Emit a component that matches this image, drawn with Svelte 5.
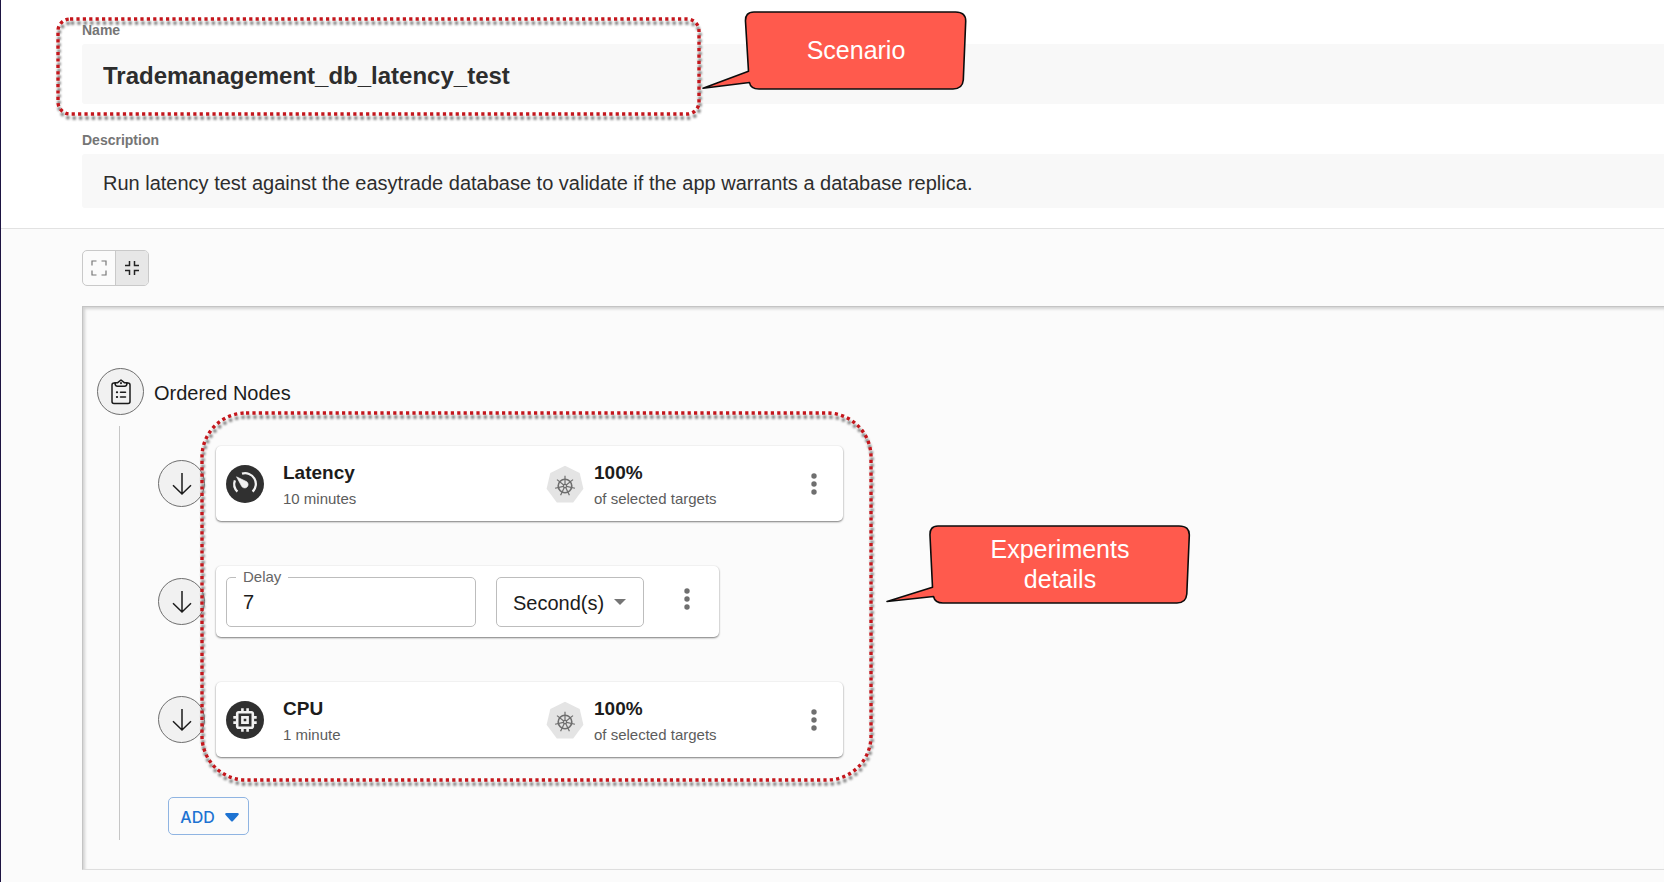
<script>
  let name = $state('Trademanagement_db_latency_test');
  let description = $state(
    'Run latency test against the easytrade database to validate if the app warrants a database replica.'
  );
  let expanded = $state(false);
  let delay = $state('7');
  let unit = $state('Second(s)');

  const spokes = Array.from({ length: 7 }, (_, i) => (i * 360) / 7);
</script>

{#snippet dots()}
  <button class="more" type="button" aria-label="More actions">
    <svg width="8" height="24" viewBox="0 0 8 24">
      <circle cx="4" cy="4" r="2.7" /><circle cx="4" cy="12" r="2.7" /><circle cx="4" cy="20" r="2.7" />
    </svg>
  </button>
{/snippet}

{#snippet arrow()}
  <span class="circle">
    <svg width="22" height="24" viewBox="0 0 22 24" fill="none" stroke="#1b1b1b" stroke-width="1.5">
      <path d="M11 1V22M2 13.2L11 22L20 13.2" />
    </svg>
  </span>
{/snippet}

{#snippet experiment(kind, title, length)}
  <li class="row">
    {@render arrow()}
    <article class="card experiment">
      <svg class="badge" width="38" height="38" viewBox="0 0 38 38">
        <circle cx="19" cy="19" r="19" fill="#303030" />
        {#if kind === 'latency'}
          <g fill="none" stroke="#f1f1f1" stroke-width="2.3">
            <path d="M16 8.7A10.700 10.700 0 0 1 26.600 26.600" />
            <path d="M8.900 15.400A10.700 10.700 0 0 0 11.400 26.600" />
          </g>
          <path
            d="M10.500 11.800L20.800 16.700A3.500 3.500 0 1 1 15.500 21Z"
            fill="#f1f1f1"
            stroke="#f1f1f1"
            stroke-width="0.6"
            stroke-linejoin="round"
          />
        {:else}
          <path
            transform="translate(3.4 3.4) scale(1.3)"
            fill="#f1f1f1"
            d="M15 9H9v6h6V9zm-2 4h-2v-2h2v2zm8-2V9h-2V7c0-1.1-.9-2-2-2h-2V3h-2v2h-2V3H9v2H7c-1.1 0-2 .9-2 2v2H3v2h2v2H3v2h2v2c0 1.1.9 2 2 2h2v2h2v-2h2v2h2v-2h2c1.1 0 2-.9 2-2v-2h2v-2h-2v-2h2zm-4 6H7V7h10v10z"
          />
        {/if}
      </svg>
      <div class="text what">
        <strong>{title}</strong>
        <span>{length}</span>
      </div>
      <svg class="kube" width="38" height="38" viewBox="0 0 38 38">
        <path d="M19 .8L33.7 7.9L37.4 23.8L27.2 37.4H10.8L.6 23.8L4.3 7.9Z" fill="#e4e4e4" />
        <g fill="none" stroke="#6e6e6e" transform="translate(19 21)">
          <circle r="6.8" stroke-width="1.6" />
          <circle r="1.6" stroke-width="1.2" />
          {#each spokes as angle}
            <path d="M0 -1.6V-10.2" stroke-width="1.2" transform={`rotate(${angle})`} />
          {/each}
        </g>
      </svg>
      <div class="text">
        <strong>100%</strong>
        <span>of selected targets</span>
      </div>
      {@render dots()}
    </article>
  </li>
{/snippet}

{#snippet frame(w, h, r)}
  <svg width={w + 12} height={h + 12} fill="none" stroke-width="3.4" stroke-dasharray="3.2 3.2">
    <rect class="shade" x="4" y="7" width={w} height={h} rx={r} stroke="#767676" />
    <rect x="3" y="3" width={w} height={h} rx={r} stroke="#c4161c" />
  </svg>
{/snippet}

<main>
  <section class="fields">
    <div class="field">
      <label for="name">Name</label>
      <input id="name" class="name" type="text" bind:value={name} />
    </div>
    <div class="field">
      <label for="description">Description</label>
      <input id="description" type="text" bind:value={description} />
    </div>
    <div class="frame frame-scenario">{@render frame(641, 95, 12)}</div>
    <div class="callout callout-scenario">
      <svg width="266" height="80" viewBox="0 0 266 80">
        <path
          d="M53 1H254.500Q265 1 264.700 10.500L262.300 69Q261.500 78 252 78H58Q49.500 78 48.500 71.500L2 77.200L47.500 60.300L44.500 10.500Q44 1 53 1Z"
        />
      </svg>
      <span>Scenario</span>
    </div>
  </section>

  <section class="workspace">
    <div class="toggle">
      <button type="button" aria-label="Expand" aria-pressed={expanded} onclick={() => (expanded = true)}>
        <svg width="16" height="16" viewBox="0 0 16 16" fill="none" stroke="#777" stroke-width="1.2">
          <path d="M1 5.500V1H5.500M10.500 1H15V5.500M15 10.500V15H10.500M5.500 15H1V10.500" />
        </svg>
      </button>
      <button type="button" aria-label="Collapse" aria-pressed={!expanded} onclick={() => (expanded = false)}>
        <svg width="16" height="16" viewBox="0 0 16 16" fill="none" stroke="#222" stroke-width="1.5">
          <path d="M1 5.500H5.500V1M10.500 1V5.500H15M15 10.500H10.500V15M5.500 15V10.500H1" />
        </svg>
      </button>
    </div>

    <div class="canvas">
      <header>
        <span class="circle">
          <svg width="22" height="26" viewBox="0 0 22 26" fill="none" stroke="#1b1b1b" stroke-width="1.5" stroke-linejoin="round" stroke-linecap="round">
            <path d="M5.500 4H4Q2 4 2 6V22.500Q2 24.500 4 24.500H18Q20 24.500 20 22.500V6Q20 4 18 4H16.500" />
            <path d="M5 3.700Q5 7.300 7.500 7.300H14.500Q17 7.300 17 3.700H14.300L11 1L7.700 3.700Z" />
            <path d="M10.500 13.200H15.500M10.500 18H15.500" />
            <path d="M6.800 13.200H7.200M6.800 18H7.200M11 4V4.200" stroke-width="1.9" />
          </svg>
        </span>
        <h2>Ordered Nodes</h2>
      </header>

      <div class="track">
        <ol>
          {@render experiment('latency', 'Latency', '10 minutes')}
          <li class="row">
            {@render arrow()}
            <div class="card wait">
              <div class="outlined delay">
                <label for="delay">Delay</label>
                <input id="delay" type="text" inputmode="numeric" bind:value={delay} />
              </div>
              <div class="outlined unit">
                <select aria-label="Delay unit" bind:value={unit}>
                  <option>Second(s)</option>
                  <option>Minute(s)</option>
                </select>
                <svg width="12" height="6" viewBox="0 0 12 6"><path d="M0 0H12L6 6Z" fill="#757575" /></svg>
              </div>
              {@render dots()}
            </div>
          </li>
          {@render experiment('cpu', 'CPU', '1 minute')}
        </ol>
        <button class="add" type="button">
          ADD
          <svg width="14" height="9" viewBox="0 0 14 9">
            <path d="M1.500 0H12.500Q14.500 .2 13.400 2L8 8Q7 9 6 8L.6 2Q-.5 .2 1.500 0Z" fill="#1e73d2" />
          </svg>
        </button>
        <div class="frame frame-details">{@render frame(669, 367, 44)}</div>
        <div class="callout callout-details">
          <svg width="306" height="80" viewBox="0 0 306 80">
            <path
              d="M53 1H294Q304.700 1 304.300 10.500L301.800 69Q301 78 292 78H58Q50 78 48.500 71.500L2 76.500L47.500 62.300L45 10.500Q44.500 1 53 1Z"
            />
          </svg>
          <span>Experiments<br />details</span>
        </div>
      </div>
    </div>
  </section>
</main>

<style>
  :global(body) {
    margin: 0;
    overflow: hidden;
  }

  main {
    box-sizing: border-box;
    min-height: 100vh;
    border-left: 1px solid #1d1442;
    background: #fbfbfb;
    color: #1c1c1c;
    font-family: 'Liberation Sans', Arial, sans-serif;
    font-size: 20px;
  }

  button,
  input,
  select {
    box-sizing: border-box;
    margin: 0;
    padding: 0;
    border: 0;
    background: none;
    color: inherit;
    font: inherit;
  }

  svg {
    display: block;
    flex: none;
  }

  .fields {
    position: relative;
    display: flex;
    flex-direction: column;
    gap: 28px;
    padding: 22px 0 20px 81px;
    border-bottom: 1px solid #e2e2e2;
    background: #fff;
  }

  .field {
    display: flex;
    flex-direction: column;
    gap: 6px;
  }

  .field label {
    color: #757575;
    font-size: 14px;
    font-weight: 700;
    line-height: 16px;
  }

  .field input {
    width: 100%;
    height: 54px;
    padding: 4px 21px 0;
    border-radius: 3px 0 0 3px;
    background: #f8f8f8;
    color: #2d2d2d;
  }

  .field .name {
    height: 60px;
    font-size: 24px;
    font-weight: 700;
  }

  .workspace {
    padding: 21px 0 12px 81px;
  }

  .toggle {
    display: inline-flex;
    border: 1px solid #c9c9c9;
    border-radius: 5px;
    overflow: hidden;
    vertical-align: top;
  }

  .toggle button {
    display: grid;
    place-items: center;
    width: 32px;
    height: 34px;
  }

  .toggle button + button {
    width: 33px;
    border-left: 1px solid #c9c9c9;
  }

  .toggle button[aria-pressed='true'] {
    background: #e7e7e7;
  }

  .canvas {
    margin-top: 20px;
    padding: 61px 0 29px 14px;
    border: 1px solid #c4c4c4;
    border-right: 0;
    border-bottom-color: #dedede;
    box-shadow: inset 2px 2px 3px #d2d2d2;
  }

  header {
    display: flex;
    align-items: center;
    gap: 10px;
  }

  h2 {
    margin: 0;
    padding-top: 2px;
    font-size: 20px;
    font-weight: 400;
    line-height: 24px;
  }

  .circle {
    box-sizing: border-box;
    display: grid;
    flex: none;
    place-items: center;
    width: 47px;
    height: 47px;
    border: 1px solid #6e6e6e;
    border-radius: 50%;
    background: #f1f1f1;
  }

  .track {
    position: relative;
    margin: 11px 0 0 22px;
    padding: 20px 0 5px 38px;
    border-left: 1px solid #c6c6c6;
  }

  ol {
    display: flex;
    flex-direction: column;
    gap: 45px;
    margin: 0;
    padding: 0;
    list-style: none;
  }

  .row {
    display: flex;
    align-items: center;
    gap: 11px;
  }

  .card {
    box-sizing: border-box;
    display: flex;
    align-items: center;
    padding: 0 10px;
    border-radius: 5px;
    background: #fff;
    box-shadow: 0 1px 2px rgba(0, 0, 0, 0.5), 0 0 2px rgba(0, 0, 0, 0.06);
  }

  .experiment {
    width: 627px;
    height: 75px;
  }

  .text {
    display: flex;
    flex-direction: column;
    gap: 5px;
    padding-top: 3px;
  }

  .text strong {
    font-size: 19px;
    line-height: 22px;
  }

  .text span {
    color: #5c5c5c;
    font-size: 15px;
    line-height: 20px;
  }

  .what {
    width: 263px;
    margin-left: 19px;
  }

  .kube {
    margin-right: 10px;
  }

  .more {
    display: grid;
    place-items: center;
    width: 38px;
    height: 38px;
    margin-left: auto;
  }

  .more svg {
    fill: #6f6f6f;
  }

  .wait {
    gap: 20px;
    width: 503px;
    height: 71px;
    padding-right: 13px;
  }

  .wait .more {
    margin-bottom: 6px;
  }

  .outlined {
    position: relative;
    box-sizing: border-box;
    height: 50px;
    border: 1px solid #bdbdbd;
    border-radius: 5px;
  }

  .delay {
    width: 250px;
  }

  .delay label {
    position: absolute;
    top: -9px;
    left: 9px;
    padding: 0 7px;
    background: #fff;
    color: #666;
    font-size: 15px;
    line-height: 16px;
  }

  .outlined input,
  .outlined select {
    width: 100%;
    height: 100%;
    padding: 2px 16px 0;
    appearance: none;
  }

  .unit {
    width: 148px;
  }

  .unit svg {
    position: absolute;
    top: 21px;
    right: 17px;
    pointer-events: none;
  }

  .add {
    display: flex;
    align-items: center;
    justify-content: center;
    gap: 10px;
    width: 81px;
    height: 38px;
    margin: 40px 0 0 10px;
    padding: 2px 0 0 2px;
    border: 1px solid #8fb4e2;
    border-radius: 5px;
    color: #1e73d2;
    font-family: Inter, 'Liberation Sans', sans-serif;
    font-size: 16px;
    font-weight: 500;
  }

  .frame,
  .callout {
    position: absolute;
    pointer-events: none;
  }

  .shade {
    filter: blur(1px);
  }

  .frame-scenario {
    top: 16px;
    left: 54px;
  }

  .frame-details {
    top: -16px;
    left: 79px;
  }

  .callout path {
    fill: #ff5a4d;
    stroke: #0c0c0c;
    stroke-width: 1.6;
    stroke-linejoin: round;
  }

  .callout span {
    position: absolute;
    inset: 0 0 3px 44px;
    display: grid;
    place-content: center;
    color: #fff;
    font-size: 25px;
    line-height: 30px;
    text-align: center;
  }

  .callout-scenario {
    top: 11px;
    left: 700px;
  }

  .callout-details {
    top: 99px;
    left: 765px;
  }
</style>
